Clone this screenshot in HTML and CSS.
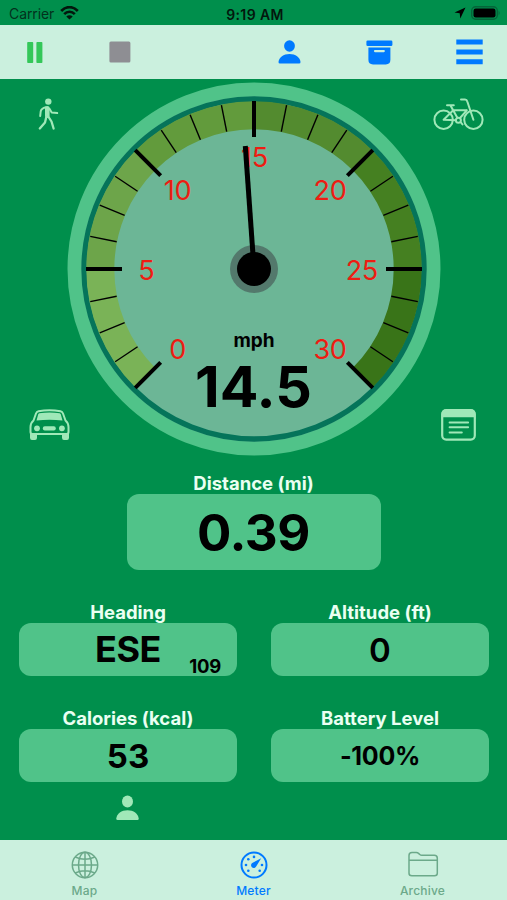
FILE: index.html
```html
<!DOCTYPE html>
<html lang="en">
<head>
<meta charset="utf-8">
<title>Meter</title>
<link rel="stylesheet" href="styles.css">
</head>
<body>
<header class="status">
  <div class="status-left"><span>Carrier</span>
    <svg width="19" height="14" viewBox="0 0 19 14"><g fill="none" stroke="#03170d" stroke-width="2.6"><path d="M1.2 5C6-.2 13-.2 17.8 5"/><path d="M4.2 8.2c3-3.2 7.600-3.200 10.600 0"/></g><path fill="#03170d" d="M9.500 13.600 6.300 10.400c1.800-1.700 4.600-1.700 6.400 0z"/></svg>
  </div>
  <div class="status-time">9:19 AM</div>
  <div class="status-right">
    <svg width="12" height="12" viewBox="0 0 12 12"><path fill="#000" d="M11.500.5.5 5.600l5.200.700.6 5.300z"/></svg>
    <svg width="30" height="14" viewBox="0 0 30 14"><rect x=".7" y=".7" width="25.600" height="12.600" rx="4" fill="none" stroke="#05653a" stroke-width="1.400"/><rect x="2.500" y="2.500" width="22" height="9" rx="2.200"/><path fill="#05653a" d="M27.600 4.500q2 2.500 0 5z"/></svg>
  </div>
</header>
<nav class="toolbar">
  <svg class="pause" width="16" height="21" viewBox="0 0 16 21"><path fill="#34c759" d="M1 0h4.400q.8 0 .8.800v19.400q0 .8-.8.800H1q-.8 0-.8-.8V.8Q.2 0 1 0zm9.200 0h4.400q.8 0 .8.800v19.400q0 .8-.8.800h-4.400q-.8 0-.8-.8V.8q0-.8.8-.8z"/></svg>
  <svg class="stop" width="22" height="22" viewBox="0 0 22 22"><rect x=".4" y=".4" width="21" height="21" rx="1.500" fill="#8e8e93"/></svg>
  <svg class="user" width="23" height="24" viewBox="0 0 23 24"><g fill="#007aff"><ellipse cx="11.500" cy="6" rx="5.400" ry="5.800"/><path d="M2 23.500Q.4 23.500.5 22C1 17.300 5.500 14 11.500 14s10.500 3.300 11 8q.1 1.500-1.500 1.500z"/></g></svg>
  <svg class="box" width="27" height="25" viewBox="0 0 27 25"><g fill="#007aff"><rect x=".4" y=".5" width="26" height="5.500" rx="1.300"/><path fill-rule="evenodd" d="M2.400 7.500h22v12.300q0 4.600-4.600 4.600H7q-4.600 0-4.600-4.600zM9 10a1.100 1.100 0 0 0 0 2.200h8.800a1.100 1.100 0 0 0 0-2.200z"/></g></svg>
  <svg class="menu" width="27" height="26" viewBox="0 0 27 26"><path fill="#007aff" d="M.3.500h26.400v5H.3zm0 10h26.400v5H.3zm0 9.800h26.400v5H.3z"/></svg>
</nav>
<main>
  <section class="gauge">
    <svg class="dial" width="374" height="374" viewBox="67 82 374 374">
      <circle cx="254" cy="269" r="179.500" fill="#6cb696" stroke="#50c389" stroke-width="14"/>
      <circle cx="254" cy="269" r="170" fill="none" stroke="#05745a" stroke-width="5.400"/>
      <g id="bands"></g>
      <g id="ticks" stroke="#000"></g>
      <g class="nums">
        <text x="177.500" y="358.500">0</text><text x="146.300" y="279.500">5</text><text x="177.500" y="199.500">10</text><text x="254.500" y="167.300">15</text><text x="330" y="199.500">20</text><text x="361.800" y="279.500">25</text><text x="330" y="358.500">30</text>
      </g>
      <circle cx="254" cy="269" r="24" fill="#53796c"/>
      <path d="M254 269 245.300 146" stroke="#000" stroke-width="5"/>
      <circle cx="254" cy="269" r="17" fill="#000"/>
      <text class="unit" x="254" y="347">mph</text>
      <text class="speed" x="253.500" y="407" textLength="117" lengthAdjust="spacingAndGlyphs">14.5</text>
    </svg>
    <svg class="walk" width="22" height="33" viewBox="0 0 22 33"><circle cx="10.300" cy="3.600" r="3.200" fill="#a0e8b8"/><g fill="none" stroke="#a0e8b8" stroke-linecap="round" stroke-linejoin="round"><path d="M9.300 10.300v7.500" stroke-width="4.600"/><path d="M8 9.300Q3.200 10.500 2.700 13.500L2.200 18M11.300 10.500l2.400 4 5.500.6" stroke-width="2"/><path d="M8.300 19 7 24.500l-5.200 6M10.300 18.500l3.200 5 2.100 7" stroke-width="2.300"/></g></svg>
    <svg class="bike" width="51" height="33" viewBox="0 0 51 33"><g fill="none" stroke="#a0e8b8" stroke-width="2" stroke-linecap="round" stroke-linejoin="round"><circle cx="10.600" cy="21.800" r="9.200"/><circle cx="40.400" cy="21.800" r="9.200"/><circle cx="25.400" cy="22.200" r="2.500"/><path d="M14 7.200h6.800M17.500 7.500l7 12.500M19.400 12.300h14.300M20 12.500 10.600 21.800l12.200.4M27 20l6.800-7.700M28 1.500h4q1.800 0 2.300 2l6.100 18.300M28 24.500l1.500 2"/></g></svg>
    <svg class="car" width="41" height="33" viewBox="0 0 41 33"><path fill="none" stroke="#a0e8b8" stroke-width="2" d="M9.500 3.200q11-2 22 0 1.800.4 2.500 2.300l2.500 7Q39.500 15 39.500 19v5q0 2-2 2h-34q-2 0-2-2v-5q0-4 3-6.500L7 5.500q.7-1.900 2.500-2.300z"/><g fill="#a0e8b8"><path d="M10.300 5.300q10.200-1.700 20.400 0l1 .8 1.800 6.400q-13-1.500-26 0l1.800-6.400z"/><circle cx="8" cy="20.300" r="2.900"/><circle cx="32.900" cy="20.300" r="2.900"/><rect x="13.800" y="18.300" width="13" height="4.200" rx="2"/><path d="M1 25h7v4.800q0 2.200-2 2.200H3q-2 0-2-2.200zm32 0h7v4.800q0 2.200-2 2.200h-3q-2 0-2-2.200z"/></g></svg>
    <svg class="note" width="35" height="32" viewBox="0 0 35 32"><rect x="1.200" y="1.200" width="32.600" height="29.400" rx="4" fill="none" stroke="#a0e8b8" stroke-width="2.200"/><path fill="#a0e8b8" d="M.5 10V5Q.5.500 5 .5h25q4.500 0 4.500 4.500v5l-1.700-1.800H2.200z"/><path d="M8.600 13.500h18.500M8.600 18.300h18.500M8.600 23.400h12.200" stroke="#a0e8b8" stroke-width="2" stroke-linecap="round"/></svg>
  </section>
  <section class="field distance"><h2>Distance (mi)</h2><div class="value">0.39</div></section>
  <div class="fields">
    <section class="field"><h2>Heading</h2><div class="value heading">ESE<span class="degrees">109</span></div></section>
    <section class="field"><h2>Altitude (ft)</h2><div class="value altitude">0</div></section>
    <section class="field"><h2>Calories (kcal)</h2><div class="value">53</div></section>
    <section class="field"><h2>Battery Level</h2><div class="value battery">-100%</div></section>
  </div>
  <svg class="profile" width="23" height="26" viewBox="0 0 23 26"><g fill="#a0e8b8"><ellipse cx="11.500" cy="6.600" rx="5.500" ry="6"/><path d="M1.500 25Q.2 25 .3 23.500C.8 18.500 5.500 15.200 11.500 15.200s10.700 3.300 11.200 8.300q.1 1.500-1.200 1.500z"/></g></svg>
</main>
<footer class="tabs">
  <div class="tab"><svg width="28" height="28" viewBox="0 0 28 28"><g fill="none" stroke="#6ca98a" stroke-width="1.500"><circle cx="14" cy="14" r="12.700"/><ellipse cx="14" cy="14" rx="6.500" ry="12.700"/><path d="M14 1.300v25.400M1.300 14h25.400M4.200 6Q14 10.500 23.800 6M4.200 22q9.800-4.500 19.600 0"/></g></svg><span>Map</span></div>
  <div class="tab active"><svg width="28" height="28" viewBox="0 0 28 28"><circle cx="14" cy="14" r="12.500" fill="none" stroke="#007aff" stroke-width="2"/><g fill="#007aff"><path d="M21.200 7.200 16.300 15.200a2.700 2.700 0 1 1-3.600-3.400z"/><circle cx="14" cy="5.900" r="1.300"/><circle cx="8.300" cy="8.300" r="1.300"/><circle cx="6" cy="14" r="1.300"/><circle cx="8.300" cy="19.700" r="1.300"/><circle cx="22" cy="14" r="1.300"/><circle cx="19.700" cy="19.700" r="1.300"/></g></svg><span>Meter</span></div>
  <div class="tab"><svg width="32" height="28" viewBox="0 0 32 28"><path fill="none" stroke="#6ca98a" stroke-width="1.500" stroke-linejoin="round" d="M2 22.300V4.500Q2 1.600 5 1.600h4.200q1.500 0 2.600 1l1 .9q.8.700 2 .7h12.500q3 0 3 3v15.100q0 2.500-2.800 2.500H4.800Q2 24.800 2 22.300zM2 9.200h28.300"/></svg><span>Archive</span></div>
</footer>
<script src="gauge.js"></script>
</body>
</html>
```
FILE: styles.css
```css
* { box-sizing: border-box; }
body { margin: 0; width: 507px; height: 900px; overflow: hidden; display: flex; flex-direction: column; background: #008f4c; color: #000; font-family: Inter, "Liberation Sans", sans-serif; }
svg { display: block; flex: none; }
.status { height: 25px; display: grid; grid-template-columns: 1fr auto 1fr; align-items: center; padding: 3px 6px 0 9px; font-size: 14px; }
.status-left { display: flex; gap: 6px; align-items: center; color: #03311d; letter-spacing: -.1px; margin-top: -2px; }
.status-left svg { margin-top: -1px; }
.status-time { font-weight: 600; font-size: 14px; letter-spacing: .4px; color: #03170d; }
.status-right { display: flex; justify-content: flex-end; gap: 5px; align-items: center; margin-top: -2px; }
.toolbar { height: 54px; background: #cbf0de; display: flex; align-items: center; padding: 0 0 0 27px; }
.stop { margin-left: 66px; }
.user { margin-left: 147px; }
.box { margin-left: 64.500px; }
.menu { margin-left: 63px; }
main { height: 761px; display: flex; flex-direction: column; }
.gauge { height: 393px; display: grid; grid-template: 1fr 1fr / 1fr 1fr; padding: 3px 23px 14px 29px; }
.dial { grid-area: 1 / 1 / 3 / 3; margin-left: 38px; }
.walk { grid-area: 1 / 1; margin: 16px 0 0 9px; }
.bike { grid-area: 1 / 2; justify-self: end; margin-top: 16px; }
.car { grid-area: 2 / 1; align-self: end; margin-bottom: 17px; }
.note { grid-area: 2 / 2; place-self: end; margin: 0 8px 17px 0; }
.nums { fill: #ee1c12; font-size: 27px; text-anchor: middle; letter-spacing: -.3px; }
.unit { font-size: 19px; font-weight: 700; text-anchor: middle; }
.speed { font-size: 57px; font-weight: 700; text-anchor: middle; }
.field h2 { margin: 0; height: 22px; line-height: 22px; font-size: 18.500px; font-weight: 700; text-align: center; color: #eafff2; white-space: nowrap; }
.value { position: relative; height: 53px; border-radius: 12px; background: #50c389; display: flex; align-items: center; justify-content: center; font-weight: 700; font-size: 33px; }
.distance { width: 254px; margin: 0 auto; }
.distance .value { height: 76px; font-size: 51px; letter-spacing: -.5px; }
.value.heading { font-size: 36px; padding-bottom: 2px; letter-spacing: -.5px; }
.degrees { position: absolute; right: 16px; bottom: -1px; font-size: 18.500px; letter-spacing: -.2px; }
.altitude { font-weight: 600; }
.value.battery { font-size: 25px; letter-spacing: -.3px; }
.fields { display: grid; grid-template-columns: 218px 218px; column-gap: 34px; row-gap: 31px; margin: 31px 0 0 19px; }
.profile { margin: 13px 0 0 116px; }
.tabs { height: 60px; background: #cbf0de; display: grid; grid-template-columns: repeat(3, 1fr); padding-top: 11px; }
.tab { display: flex; flex-direction: column; align-items: center; color: #6ca98a; font-size: 12px; font-weight: 500; gap: 4px; line-height: 16px; letter-spacing: .2px; }
.active { color: #007aff; }
```
FILE: gauge.js
```js
const NS = "http://www.w3.org/2000/svg";
const CX = 254, CY = 269;
const point = (radius, degrees) => {
  const a = degrees * Math.PI / 180;
  return (CX + radius * Math.cos(a)).toFixed(2) + " " + (CY + radius * Math.sin(a)).toFixed(2);
};
function addPath(parent, d, attributes) {
  const path = document.createElementNS(NS, "path");
  path.setAttribute("d", d);
  for (const key in attributes) path.setAttribute(key, attributes[key]);
  document.getElementById(parent).appendChild(path);
}
const colors = ["#7ab357", "#6da54a", "#629b3c", "#538b2f", "#458021", "#397418"];
colors.forEach((color, i) => {
  const start = 135 + i * 45;
  addPath("bands", `M${point(153.7, start)}A153.7 153.7 0 0 1 ${point(153.7, start + 45)}`,
    { fill: "none", stroke: color, "stroke-width": 28 });
});
for (let i = 0; i <= 24; i++) {
  const angle = 135 + i * 11.25;
  const major = i % 4 === 0;
  addPath("ticks", `M${point(major ? 132 : 140, angle)}L${point(major ? 168 : 167, angle)}`,
    { "stroke-width": major ? 4 : 1.4 });
}
```
